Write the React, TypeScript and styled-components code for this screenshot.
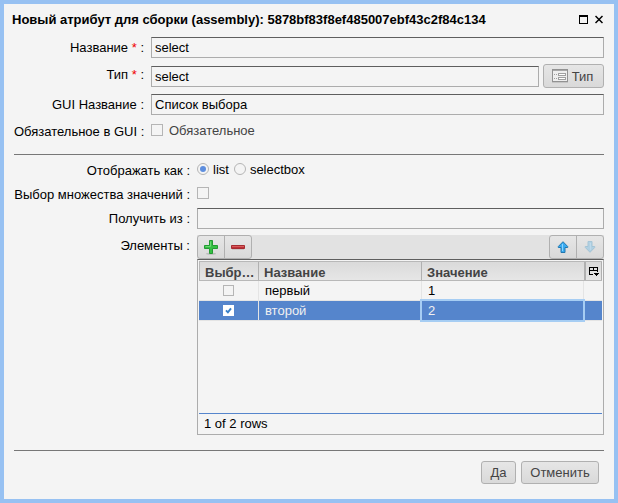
import React from 'react';
import styled, { createGlobalStyle, css } from 'styled-components';

const GlobalStyle = createGlobalStyle`
  html, body { margin: 0; padding: 0; }
  body { font: 13px/15px "Liberation Sans", Arial, sans-serif; color: #000; }
  *, *::before, *::after { box-sizing: border-box; }
`;

const face = 'linear-gradient(#e6e6e6, #d9d9d9)';

const Window = styled.div`
  width: 618px;
  height: 503px;
  border: 4px solid #97c1f2;
  background: #f4f4f4;
  overflow: hidden;
`;

const TitleBar = styled.header`
  display: flex;
  align-items: flex-start;
  height: 33px;
  padding: 8px 11px 0 8px;
`;

const Title = styled.h1`
  flex: 1;
  margin: 0;
  font-size: 13px;
  font-weight: bold;
  line-height: 15px;
  white-space: nowrap;
`;

const Controls = styled.div`
  display: flex;
  gap: 7px;
  padding-top: 3px;
  svg { display: block; }
`;

const Form = styled.div<{ $label: number; $rows: string }>`
  display: grid;
  margin: 0 10px;
  grid-template-columns: ${p => p.$label}px 1fr;
  grid-template-rows: ${p => p.$rows};
`;

const Label = styled.label<{ $top?: number }>`
  padding-top: ${p => p.$top ?? 3}px;
  padding-right: 7px;
  text-align: right;
  white-space: nowrap;
`;

const Required = styled.span`
  color: #f00000;
`;

const Field = styled.div<{ $gap?: number; $top?: number }>`
  display: flex;
  align-items: flex-start;
  gap: ${p => p.$gap ?? 4}px;
  padding-top: ${p => p.$top ?? 0}px;
`;

const Input = styled.input`
  flex: 1;
  min-width: 0;
  height: 21px;
  margin: 0;
  padding: 0 3px;
  border: 1px solid #acacac;
  border-top-color: #5e5e5e;
  border-radius: 0;
  outline: none;
  background: #f4f4f4;
  font: inherit;
  color: #000;
`;

const Button = styled.button<{ $width: number; $height: number }>`
  display: flex;
  align-items: center;
  justify-content: center;
  gap: 4px;
  width: ${p => p.$width}px;
  height: ${p => p.$height}px;
  padding: 0;
  border: 1px solid #b0b0b0;
  border-radius: 3px;
  background: ${face};
  font: inherit;
  color: #444;
`;

const TypeButton = styled(Button)`
  margin-top: -2px;
  padding-right: 2px;
`;

const Box = styled.span<{ $size: number; $checked?: boolean }>`
  display: flex;
  align-items: center;
  justify-content: center;
  width: ${p => p.$size}px;
  height: ${p => p.$size}px;
  border: 1px solid #b5b5b5;
  background: ${p => (p.$checked ? '#fff' : '#f4f4f4')};
  ${p => p.$checked && css`border-color: #fff;`}
`;

const BoxText = styled.span`
  margin-top: -1px;
  color: #444;
`;

const Radio = styled.span<{ $checked?: boolean }>`
  display: flex;
  align-items: center;
  justify-content: center;
  width: 12px;
  height: 12px;
  margin-top: 1px;
  border: 1px solid #b5b5b5;
  border-radius: 50%;
  &::before {
    content: '';
    width: 6px;
    height: 6px;
    border-radius: 50%;
    background: ${p => (p.$checked ? '#5e8ede' : 'transparent')};
  }
`;

const RadioText = styled.span`
  margin-right: 1px;
`;

const Rule = styled.div<{ $gap?: number }>`
  height: 1px;
  margin: ${p => p.$gap ?? 0}px 10px 0;
  background: #777;
`;

const Editor = styled.div`
  display: flex;
  flex-direction: column;
  height: 200px;
`;

const Toolbar = styled.div`
  display: flex;
  justify-content: space-between;
  height: 24px;
  background: #e2e2e2;
`;

const ButtonGroup = styled.div`
  display: flex;
  width: 55px;
  border: 1px solid #b0b0b0;
  border-radius: 3px;
  background: ${face};
`;

const ToolButton = styled.button`
  display: flex;
  align-items: center;
  justify-content: center;
  flex: 1;
  padding: 0;
  border: 0;
  background: none;
  & + & { border-left: 1px solid #b0b0b0; }
`;

const Table = styled.div`
  flex: 1;
  display: flex;
  flex-direction: column;
  padding: 1px;
  border: 1px solid #acacac;
  border-top-color: #5e5e5e;
`;

const HeaderRow = styled.div`
  display: grid;
  grid-template-columns: 59px 163px 163px 1fr;
  height: 20px;
  border: 1px solid #b8b8b8;
  border-right: 0;
  background: linear-gradient(#dadada, #e6e6e6);
`;

const HeaderCell = styled.div`
  padding: 3px 0 0 5px;
  border-right: 1px solid #b0b0b0;
  font-weight: bold;
  color: #444;
  white-space: nowrap;
`;

const PickerCell = styled(HeaderCell)`
  padding: 5px 0 0 3px;
  margin-left: -1px;
  border-left: 2px solid #b0b0b0;
  svg { display: block; }
`;

const Row = styled.div<{ $selected?: boolean }>`
  display: grid;
  grid-template-columns: 60px 163px 162px 1fr;
  height: 20px;
  border-bottom: 1px solid #e4e4e4;
  background: ${p => (p.$selected ? '#5585cc' : 'transparent')};
  color: ${p => (p.$selected ? '#f0f0f0' : '#000')};
`;

const Cell = styled.div`
  padding: 2px 0 0 6px;
  border-right: 1px solid #e4e4e4;
  &:last-child { border-right: 0; }
`;

const CheckCell = styled(Cell)`
  display: flex;
  justify-content: center;
  align-items: flex-start;
  padding: 4px 0 0;
`;

const ValueCell = styled(Cell)<{ $focused?: boolean }>`
  position: relative;
  ${p =>
    p.$focused &&
    css`
      &::after {
        content: '';
        position: absolute;
        inset: -2px;
        border: 2px solid #a6cdf3;
      }
    `}
`;

const Status = styled.div`
  height: 20px;
  margin-top: auto;
  padding: 2px 5px 0;
  border-top: 1px solid #5585cc;
`;

const Footer = styled.footer`
  display: flex;
  justify-content: flex-end;
  gap: 5px;
  padding: 10px 15px 0;
`;

const MaximizeIcon = () => (
  <svg width="9" height="9" shapeRendering="crispEdges">
    <path d="M0 0h9v9H0z M1 2v6h7V2z" fillRule="evenodd" />
  </svg>
);

const CloseIcon = () => (
  <svg width="8" height="9">
    <path d="M.5 1l7 7M7.5 1l-7 7" stroke="#000" strokeWidth="1.5" />
  </svg>
);

const FormIcon = () => (
  <svg width="16" height="14" shapeRendering="crispEdges">
    <path d="M.5 .5h15v12H.5z" fill="#eee" stroke="#929292" />
    <path d="M1 1h14v1H1z" fill="#a8a8a8" />
    <path d="M2 5.5h1M4 5.5h1M2 9.5h1M4 9.5h1" stroke="#a0a0a0" />
    <path d="M6.5 4.5h7v2h-7zM6.5 8.5h7v2h-7z" fill="#fff" stroke="#a0a0a0" />
    <path d="M0 13.5h16" stroke="#c4c4c4" />
  </svg>
);

const PlusIcon = () => (
  <svg width="14" height="15">
    <ellipse cx="7" cy="13.8" rx="5" ry="1" fill="#bcbcbc" />
    <path d="M5.5 .5h3v5h5v3h-5v5h-3v-5h-5v-3h5z" fill="#35c044" stroke="#229b32" />
    <path d="M6.5 1.5v5h-5" fill="none" stroke="#6bd873" />
  </svg>
);

const MinusIcon = () => (
  <svg width="14" height="8">
    <path d="M1 6.5h12" stroke="#ccc4c4" />
    <path d="M.5 2.5h13v3H.5z" fill="#bf3038" stroke="#a52d32" />
    <path d="M1 3.5h12" stroke="#d85c5c" />
  </svg>
);

const ArrowIcon = ({ down }: { down?: boolean }) => (
  <svg width="12" height="13" opacity={down ? 0.4 : 1}>
    <g transform={down ? 'rotate(180 6 6)' : undefined}>
      <path
        d="M6 .7L10.7 5.5V6.5H8v5H4v-5H1.3V5.5z"
        fill={down ? '#6dbbe8' : '#38aaf0'}
        stroke={down ? '#4d9cc8' : '#2277ae'}
      />
      <path d="M5.5 3v7" stroke="#8bd4ff" />
    </g>
  </svg>
);

const PickerIcon = () => (
  <svg width="11" height="10" shapeRendering="crispEdges">
    <path d="M0 0h9v5H8V4H1v3h3v1H0z M1 1v2h3V1z M5 1v2h3V1z" fillRule="evenodd" />
    <path d="M5 6h5v1H9v1H8v1H7V8H6V7H5z" />
  </svg>
);

const CheckIcon = () => (
  <svg width="7" height="7">
    <path d="M1 3.3l1.9 2L6 1.3" fill="none" stroke="#387fc7" strokeWidth="1.9" />
  </svg>
);

const rows = [
  { name: 'первый', value: '1', selected: false },
  { name: 'второй', value: '2', selected: true },
];

export default function App() {
  return (
    <>
      <GlobalStyle />
      <Window>
        <TitleBar>
          <Title>Новый атрибут для сборки (assembly): 5878bf83f8ef485007ebf43c2f84c134</Title>
          <Controls>
            <MaximizeIcon />
            <CloseIcon />
          </Controls>
        </TitleBar>
        <Form $label={137} $rows="29px 28px 30px 30px">
          <Label>Название <Required>*</Required> :</Label>
          <Field><Input defaultValue="select" /></Field>
          <Label $top={1}>Тип <Required>*</Required> :</Label>
          <Field>
            <Input defaultValue="select" />
            <TypeButton $width={61} $height={24}><FormIcon />Тип</TypeButton>
          </Field>
          <Label>GUI Название :</Label>
          <Field><Input defaultValue="Список выбора" /></Field>
          <Label $top={0}>Обязательное в GUI :</Label>
          <Field $gap={6}><Box $size={12} /><BoxText>Обязательное</BoxText></Field>
        </Form>
        <Rule />
        <Form $label={183} $rows="32px 21px 27px 200px">
          <Label $top={8}>Отображать как :</Label>
          <Field $top={7}>
            <Radio $checked /><RadioText>list</RadioText>
            <Radio /><RadioText>selectbox</RadioText>
          </Field>
          <Label $top={0}>Выбор множества значений :</Label>
          <Field><Box $size={12} /></Field>
          <Label>Получить из :</Label>
          <Field><Input /></Field>
          <Label>Элементы :</Label>
          <Editor>
            <Toolbar>
              <ButtonGroup>
                <ToolButton><PlusIcon /></ToolButton>
                <ToolButton><MinusIcon /></ToolButton>
              </ButtonGroup>
              <ButtonGroup>
                <ToolButton><ArrowIcon /></ToolButton>
                <ToolButton><ArrowIcon down /></ToolButton>
              </ButtonGroup>
            </Toolbar>
            <Table>
              <HeaderRow>
                <HeaderCell>Выбр…</HeaderCell>
                <HeaderCell>Название</HeaderCell>
                <HeaderCell>Значение</HeaderCell>
                <PickerCell><PickerIcon /></PickerCell>
              </HeaderRow>
              {rows.map(row => (
                <Row key={row.name} $selected={row.selected}>
                  <CheckCell>
                    <Box $size={11} $checked={row.selected}>{row.selected && <CheckIcon />}</Box>
                  </CheckCell>
                  <Cell>{row.name}</Cell>
                  <ValueCell $focused={row.selected}>{row.value}</ValueCell>
                  <Cell />
                </Row>
              ))}
              <Status>1 of 2 rows</Status>
            </Table>
          </Editor>
        </Form>
        <Rule $gap={15} />
        <Footer>
          <Button $width={35} $height={23}>Да</Button>
          <Button $width={78} $height={23}>Отменить</Button>
        </Footer>
      </Window>
    </>
  );
}
